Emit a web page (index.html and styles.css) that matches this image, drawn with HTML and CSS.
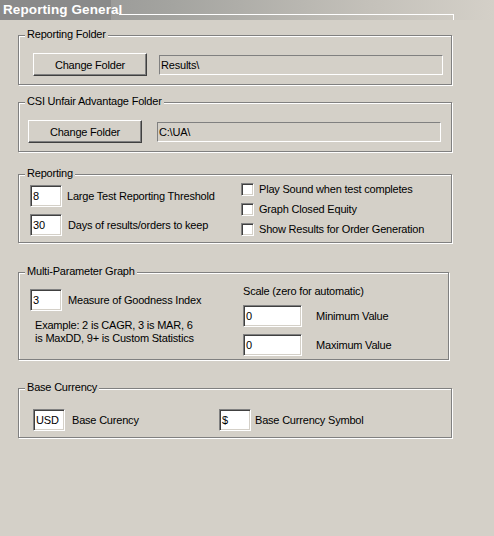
FILE: index.html
```html
<!DOCTYPE html>
<html>
<head>
<meta charset="utf-8">
<link rel="stylesheet" href="styles.css">
</head>
<body>
<div class="header">
  <span class="title">Reporting General</span>
  <span class="tabline"></span>
</div>
<div class="content">
  <div class="group g1">
    <span class="legend">Reporting Folder</span>
    <button class="btn">Change Folder</button>
    <div class="path">Results\</div>
  </div>
  <div class="group g2">
    <span class="legend">CSI Unfair Advantage Folder</span>
    <button class="btn">Change Folder</button>
    <div class="path">C:\UA\</div>
  </div>
  <div class="group g3">
    <span class="legend">Reporting</span>
    <div class="col-left">
      <div class="row"><div class="field w32">8</div><span class="lbl">Large Test Reporting Threshold</span></div>
      <div class="row"><div class="field w32">30</div><span class="lbl l6">Days of results/orders to keep</span></div>
    </div>
    <div class="col-checks">
      <div class="crow"><span class="check"></span><span>Play Sound when test completes</span></div>
      <div class="crow"><span class="check"></span><span>Graph Closed Equity</span></div>
      <div class="crow"><span class="check"></span><span>Show Results for Order Generation</span></div>
    </div>
  </div>
  <div class="group g4">
    <span class="legend">Multi-Parameter Graph</span>
    <div class="col-mpg">
      <div class="row"><div class="field w32">3</div><span class="lbl l6">Measure of Goodness Index</span></div>
      <p class="example">Example: 2 is CAGR, 3 is MAR, 6<br>is MaxDD, 9+ is Custom Statistics</p>
    </div>
    <div class="col-scale">
      <div class="scale-title">Scale (zero for automatic)</div>
      <div class="row srow"><div class="field w59">0</div><span class="lbl l14">Minimum Value</span></div>
      <div class="row srow2"><div class="field w59">0</div><span class="lbl l14">Maximum Value</span></div>
    </div>
  </div>
  <div class="group g5">
    <span class="legend">Base Currency</span>
    <div class="row cur1"><div class="field w32">USD</div><span class="lbl l7">Base Curency</span></div>
    <div class="row"><div class="field w32">$</div><span class="lbl l4">Base Currency Symbol</span></div>
  </div>
</div>
</body>
</html>
```

FILE: styles.css
```css
html, body {
  margin: 0;
  padding: 0;
}
body {
  width: 494px;
  height: 536px;
  overflow: hidden;
  background: #d4d0c8;
  font-family: "Liberation Sans", Arial, sans-serif;
  font-size: 11px;
  letter-spacing: -0.2px;
  color: #000;
}
.header {
  height: 20px;
  display: flex;
  background: linear-gradient(to right, #8e8e8e 0%, #a4a4a0 35%, #c4c1ba 75%, #d4d0c8 100%);
}
.title {
  flex: none;
  width: 108px;
  padding-left: 3px;
  background: #8a8a8a;
  color: #fff;
  font-weight: bold;
  font-size: 13.5px;
  letter-spacing: 0.1px;
  line-height: 20px;
  white-space: nowrap;
}
.tabline {
  flex: none;
  align-self: flex-end;
  margin-left: 8px;
  width: 334px;
  height: 5px;
  border-top: 1px solid #fff;
  border-right: 1px solid #fff;
}
.content {
  padding: 15px 0 0 18px;
}
.group {
  position: relative;
  box-sizing: border-box;
  width: 434px;
  border: 1px solid #808080;
  box-shadow: inset 1px 1px 0 #fff, 1px 1px 0 #fff;
}
.legend {
  position: absolute;
  top: -8px;
  left: 6px;
  padding: 0 2px;
  line-height: 13px;
  background: #d4d0c8;
  white-space: nowrap;
}
.btn {
  box-sizing: border-box;
  flex: none;
  width: 114px;
  height: 23px;
  padding: 0;
  background: #d4d0c8;
  border: 1px solid;
  border-color: #fff #404040 #404040 #fff;
  box-shadow: inset -1px -1px 0 #808080;
  font: inherit;
  letter-spacing: inherit;
  color: #000;
}
.path {
  box-sizing: border-box;
  width: 284px;
  height: 20px;
  border: 1px solid;
  border-color: #808080 #fff #fff #808080;
  padding-left: 1px;
  line-height: 18px;
}
.g1 {
  height: 50px;
  display: flex;
  align-items: center;
  padding: 9px 0 0 14px;
  gap: 12px;
}
.g2 {
  margin-top: 17px;
  height: 50px;
  display: flex;
  align-items: center;
  padding: 9px 0 0 9px;
  gap: 15px;
}
.field {
  box-sizing: border-box;
  flex: none;
  height: 22px;
  background: #fff;
  border: 1px solid;
  border-color: #808080 #fff #fff #808080;
  box-shadow: inset 1px 1px 0 #404040, inset -1px -1px 0 #d4d0c8;
  padding-left: 2px;
  line-height: 20px;
}
.w32 { width: 32px; }
.w59 { width: 59px; }
.row {
  display: flex;
  align-items: center;
  gap: 5px;
}
.lbl { white-space: nowrap; }
.l6 { margin-left: 1px; }
.l7 { margin-left: 2px; }
.l4 { margin-left: -1px; }
.l14 { margin-left: 9px; }
.g3 {
  margin-top: 22px;
  height: 69px;
  display: flex;
  padding-left: 11px;
}
.col-left {
  width: 211px;
  padding-top: 10px;
  display: flex;
  flex-direction: column;
  gap: 7px;
}
.col-checks {
  padding-top: 7px;
  display: flex;
  flex-direction: column;
  gap: 6px;
}
.crow {
  display: flex;
  align-items: center;
  gap: 5px;
  height: 14px;
}
.check {
  box-sizing: border-box;
  width: 13px;
  height: 13px;
  background: #fff;
  border: 1px solid;
  border-color: #808080 #fff #fff #808080;
  box-shadow: inset 1px 1px 0 #404040, inset -1px -1px 0 #d4d0c8;
}
.g4 {
  margin-top: 29px;
  width: 431px;
  height: 88px;
  display: flex;
  padding-left: 11px;
}
.col-mpg {
  width: 213px;
  padding-top: 16px;
}
.example {
  margin: 8px 0 0 5px;
  line-height: 13px;
}
.col-scale {
  padding-top: 12px;
}
.scale-title {
  line-height: 13px;
}
.srow { margin-top: 7px; }
.srow2 { margin-top: 7px; }
.g5 {
  margin-top: 28px;
  height: 50px;
  display: flex;
  padding: 13px 0 0 14px;
}
.cur1 {
  width: 186px;
}
```
